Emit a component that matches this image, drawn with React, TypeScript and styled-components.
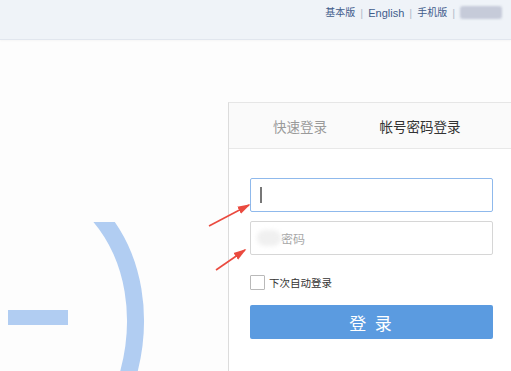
import styled, { createGlobalStyle } from "styled-components";

const GlobalStyle = createGlobalStyle`
  * {
    box-sizing: border-box;
    margin: 0;
    padding: 0;
  }
  html, body {
    width: 100%;
    height: 100%;
    overflow: hidden;
  }
  body {
    font-family: "Liberation Sans", "Noto Sans CJK SC", sans-serif;
    background-color: #fdfdfd;
    color: #333;
  }
`;

const links = [
  { label: "基本版", cjk: true },
  { label: "English", cjk: false },
  { label: "手机版", cjk: true },
];

function App() {
  return (
    <Page>
      <GlobalStyle />
      <TopBar>
        {links.map((l) => (
          <LinkGroup key={l.label}>
            <TopLink $cjk={l.cjk}>{l.label}</TopLink>
            <Sep>|</Sep>
          </LinkGroup>
        ))}
        <BlurredName />
      </TopBar>
      <Main>
        <Illustration>
          <svg width="228" height="331" viewBox="0 40 228 331">
            <defs>
              <clipPath id="arcClip">
                <rect x="0" y="222" width="228" height="160" />
              </clipPath>
            </defs>
            <path
              d="M 96 212 C 135 255 146 320 125 385"
              fill="none"
              stroke="#b1cdf2"
              strokeWidth="17"
              clipPath="url(#arcClip)"
            />
            <rect x="8" y="310" width="60" height="15" fill="#b1cdf2" />
          </svg>
        </Illustration>
        <Panel>
          <Tabs>
            <Tab>快速登录</Tab>
            <Tab $active>帐号密码登录</Tab>
          </Tabs>
          <Form>
            <Field $focused>
              <Caret />
            </Field>
            <Field>
              <Blob />
              <Placeholder>密码</Placeholder>
            </Field>
            <CheckRow>
              <Box />
              <CheckLabel>下次自动登录</CheckLabel>
            </CheckRow>
            <SubmitButton>登 录</SubmitButton>
          </Form>
        </Panel>
      </Main>
      <Arrows width="511" height="371" viewBox="0 0 511 371">
        <defs>
          <marker
            id="head"
            markerWidth="8"
            markerHeight="6"
            refX="7"
            refY="3"
            orient="auto"
            markerUnits="strokeWidth"
          >
            <path d="M0,0.5 L8,3 L0,5.5 Z" fill="#ea4a3f" />
          </marker>
        </defs>
        <line x1="209" y1="226" x2="249" y2="205" stroke="#ea4a3f" strokeWidth="1.6" markerEnd="url(#head)" />
        <line x1="216" y1="270" x2="245" y2="250" stroke="#ea4a3f" strokeWidth="1.6" markerEnd="url(#head)" />
      </Arrows>
    </Page>
  );
}

const Page = styled.div`
  position: relative;
  width: 511px;
  height: 371px;
  display: flex;
  flex-direction: column;
  overflow: hidden;
`;

const TopBar = styled.div`
  height: 40px;
  flex-shrink: 0;
  display: flex;
  justify-content: flex-end;
  align-items: flex-start;
  padding: 6px 9px 0 0;
  background-color: #eff3f8;
  border-bottom: 1px solid #e1e6ee;
  box-shadow: 0 1px 2px rgba(0, 0, 0, 0.03);
`;

const LinkGroup = styled.div`
  display: flex;
  align-items: center;
  height: 14px;
`;

const TopLink = styled.span<{ $cjk?: boolean }>`
  font-size: ${(p) => (p.$cjk ? "10px" : "11px")};
  line-height: 14px;
  color: #3f5c8c;
`;

const Sep = styled.span`
  font-size: 11px;
  line-height: 14px;
  color: #b4bcc8;
  margin: 0 5px;
`;

const BlurredName = styled.div`
  width: 42px;
  height: 13px;
  border-radius: 3px;
  background-color: #c6cbd9;
  filter: blur(1px);
`;

const Main = styled.div`
  flex: 1;
  display: flex;
`;

const Illustration = styled.div`
  width: 228px;
  flex-shrink: 0;
  svg {
    display: block;
  }
`;

const Panel = styled.div`
  flex: 1;
  margin-top: 62px;
  border-left: 1px solid #dcdcdc;
  border-top: 1px solid #e6e6e6;
  background-color: #fff;
`;

const Tabs = styled.div`
  height: 46px;
  display: flex;
  padding-left: 11px;
  background-color: #fafafa;
  border-bottom: 1px solid #e8e8e8;
`;

const Tab = styled.div<{ $active?: boolean }>`
  width: 120px;
  display: flex;
  align-items: center;
  justify-content: center;
  font-size: 13.5px;
  color: ${(p) => (p.$active ? "#333" : "#9a9a9a")};
`;

const Form = styled.div`
  padding: 29px 0 0 21px;
  display: flex;
  flex-direction: column;
  width: 264px;
`;

const Field = styled.div<{ $focused?: boolean }>`
  height: 34px;
  width: 243px;
  display: flex;
  align-items: center;
  padding-left: 9px;
  margin-bottom: 9px;
  border: 1px solid ${(p) => (p.$focused ? "#8fb9ec" : "#d6d6d6")};
  border-radius: 2px;
  background-color: #fff;
`;

const Caret = styled.div`
  width: 1.5px;
  height: 16px;
  background-color: #777;
`;

const Blob = styled.div`
  width: 24px;
  height: 16px;
  margin-left: -3px;
  border-radius: 8px;
  background-color: #f0f0f0;
  filter: blur(2px);
`;

const Placeholder = styled.span`
  font-size: 12px;
  color: #a8a8a8;
  margin-left: 0;
`;

const CheckRow = styled.div`
  display: flex;
  align-items: center;
  margin-top: 11px;
  height: 15px;
`;

const Box = styled.div`
  width: 15px;
  height: 15px;
  border: 1px solid #b9b9b9;
  border-radius: 1px;
  background-color: #fff;
`;

const CheckLabel = styled.span`
  margin-left: 4px;
  font-size: 10.5px;
  color: #333;
`;

const SubmitButton = styled.button`
  margin-top: 15px;
  width: 243px;
  height: 34px;
  border: none;
  border-radius: 2px;
  background-color: #5b9be0;
  color: #fff;
  font-family: "Liberation Sans", "Noto Sans CJK SC", sans-serif;
  font-size: 17px;
  letter-spacing: 2px;
`;

const Arrows = styled.svg`
  position: absolute;
  left: 0;
  top: 0;
  pointer-events: none;
`;

export default App;
